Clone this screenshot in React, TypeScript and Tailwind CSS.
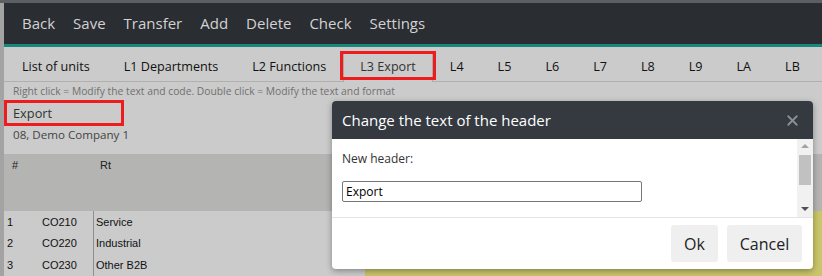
import { X } from "lucide-react";

const navItems = ["Back", "Save", "Transfer", "Add", "Delete", "Check", "Settings"];
const tabs = ["List of units", "L1 Departments", "L2 Functions", "L3 Export", "L4", "L5", "L6", "L7", "L8", "L9", "LA", "LB"];
const rows = [
  ["1", "CO210", "Service"],
  ["2", "CO220", "Industrial"],
  ["3", "CO230", "Other B2B"],
];

export default function App() {
  return (
    <div className="relative w-[822px] h-[276px] overflow-hidden bg-[#a3a3a3] pl-[4px] font-['Open_Sans',sans-serif]">
      <div className="h-[3px] bg-[#5c5f63] -ml-[4px]" />
      <nav className="flex h-[41px] items-center bg-[#2a2d32] pl-[9px] text-[15px] text-[#d2d2d2]">
        {navItems.map((n) => (
          <span key={n} className="px-[9px]">
            {n}
          </span>
        ))}
      </nav>
      <div className="h-[3px] bg-[#18877c]" />

      <div className="bg-[#cbcbcb]">
        <div className="flex h-[35px] items-end border-b border-[#b0b0b0] pl-[1px] text-[12.6px] text-[#111]">
          {tabs.map((t) => {
            const active = t === "L3 Export";
            return (
              <div key={t} className="relative shrink-0 whitespace-nowrap">
                <div
                  className={
                    active
                      ? "-mb-px flex h-[31px] items-center border border-b-0 border-[#a9a9a9] bg-[#cbcbcb] px-[16px] text-[#333]"
                      : "flex h-[31px] items-center px-[17px] pt-[3px]"
                  }
                >
                  {t}
                </div>
                {active && (
                  <div className="pointer-events-none absolute -left-[3px] -right-[3px] top-0 bottom-[1px] border-[3px] border-[#ee1c1c]" />
                )}
              </div>
            );
          })}
        </div>

        <div className="px-[9px] pt-[1px] text-[10.3px] leading-[16px] text-[#707070]">
          Right click = Modify the text and code. Double click = Modify the text and format
        </div>

        <div className="pt-[1px]">
          <div className="w-[120px] border-[3px] border-[#ee1c1c] px-[6px] text-[12.8px] leading-[20px] text-[#333]">
            Export
          </div>
          <div className="px-[9px] pt-[1px] text-[11.6px] leading-[16px] text-[#444]">08, Demo Company 1</div>
        </div>

        <div className="mt-[11px] flex h-[57px] bg-[#b4b4b2] font-['Liberation_Sans',sans-serif] text-[11px] text-[#222]">
          <div className="w-[89px] pl-[8px] pt-[3px]">#</div>
          <div className="pl-[7px] pt-[3px]">Rt</div>
        </div>

        <div className="flex">
          <div className="w-[361px] font-['Liberation_Sans',sans-serif] text-[11px] text-[#111]">
            {rows.map((r) => (
              <div key={r[0]} className="flex h-[21.5px] items-center">
                <div className="w-[38px] pl-[3px]">{r[0]}</div>
                <div className="w-[51px]">{r[1]}</div>
                <div className="flex h-full items-center border-l border-[#8f8f8f] pl-[2px]">{r[2]}</div>
              </div>
            ))}
          </div>
          <div className="flex-1 bg-[#c9c56a]" />
        </div>
      </div>

      {/* modal */}
      <div className="absolute left-[332px] top-[101px] w-[481px] overflow-hidden rounded-[4px] bg-white shadow-[0_2px_6px_rgba(0,0,0,0.35)]">
        <div className="flex h-[38px] items-center justify-between bg-[#353a40] pl-[10px] pr-[12px]">
          <span className="text-[15px] text-white">Change the text of the header</span>
          <X className="h-[17px] w-[17px] text-[#8a9096]" strokeWidth={2.5} />
        </div>
        <div className="flex h-[79px] border-b border-[#e4e4e4]">
          <div className="flex-1 pl-[10px] pt-[12px]">
            <div className="text-[12px] leading-[16px] text-[#333]">New header:</div>
            <input
              readOnly
              value="Export"
              className="mt-[14px] h-[21px] w-[300px] rounded-[2px] border border-[#767676] px-[3px] text-[12px] text-black outline-none"
            />
          </div>
          <div className="flex w-[16px] flex-col items-center bg-[#f1f1f1]">
            <div className="mt-[5px] h-0 w-0 border-x-[4px] border-b-[4px] border-x-transparent border-b-[#a3a3a3]" />
            <div className="mt-[7px] h-[30px] w-[12px] bg-[#c1c1c1]" />
            <div className="flex-1" />
            <div className="mb-[6px] h-0 w-0 border-x-[4px] border-t-[4px] border-x-transparent border-t-[#505050]" />
          </div>
        </div>
        <div className="flex h-[51px] items-center justify-end gap-[9px] pr-[11px] text-[16px] text-[#222]">
          <button className="h-[37px] w-[47px] rounded-[3px] bg-[#efefef]">Ok</button>
          <button className="h-[37px] w-[75px] rounded-[3px] bg-[#efefef]">Cancel</button>
        </div>
      </div>
    </div>
  );
}
